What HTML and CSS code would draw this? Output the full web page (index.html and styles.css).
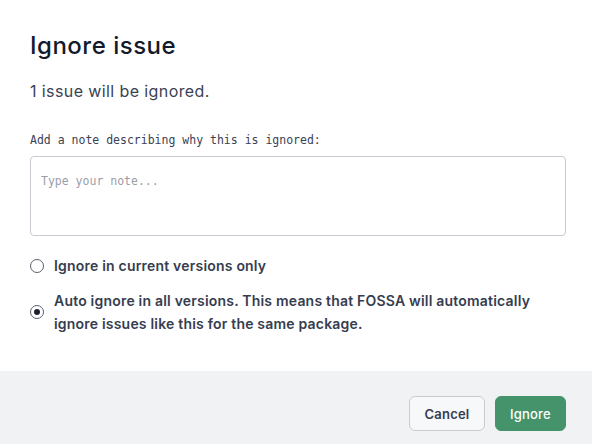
FILE: index.html
```html
<!DOCTYPE html>
<html>
<head>
<meta charset="utf-8">
<link rel="stylesheet" href="styles.css">
</head>
<body>
<div class="modal">
  <div class="content">
    <h1 class="title">Ignore issue</h1>
    <p class="summary">1 issue will be ignored.</p>
    <label class="note-label" for="note">Add a note describing why this is ignored:</label>
    <textarea id="note" class="note" placeholder="Type your note..."></textarea>
    <div class="options">
      <label class="option">
        <span class="radio"></span>
        <span class="option-text">Ignore in current versions only</span>
      </label>
      <label class="option option-multi">
        <span class="radio checked"></span>
        <span class="option-text">Auto ignore in all versions. This means that FOSSA will automatically ignore issues like this for the same package.</span>
      </label>
    </div>
  </div>
  <div class="footer">
    <button class="btn btn-secondary">Cancel</button>
    <button class="btn btn-primary">Ignore</button>
  </div>
</div>
</body>
</html>
```
FILE: styles.css
```css
html, body {
  margin: 0;
  padding: 0;
  background: #ffffff;
}
body {
  font-family: "Inter", "Noto Sans", sans-serif;
  color: #1b2233;
}
.modal {
  width: 592px;
  height: 444px;
  display: flex;
  flex-direction: column;
}
.content {
  flex: 1;
  padding: 30px 26px 0 30px;
  display: flex;
  flex-direction: column;
}
.title {
  margin: 0;
  font-size: 24px;
  font-weight: 500;
  line-height: 32px;
  color: #121a2c;
  letter-spacing: 0.5px;
}
.summary {
  margin: 18px 0 0 0;
  font-size: 16px;
  line-height: 22px;
  color: #3a4254;
  letter-spacing: 0.4px;
}
.note-label {
  margin-top: 30px;
  font-family: "DejaVu Sans Mono", monospace;
  font-size: 11.5px;
  line-height: 16px;
  color: #3a4254;
}
.note {
  margin-top: 8px;
  height: 80px;
  box-sizing: border-box;
  border: 1px solid #c9cad1;
  border-radius: 4px;
  padding: 17px 10px;
  resize: none;
  font-family: "DejaVu Sans Mono", monospace;
  font-size: 11.5px;
  outline: none;
}
.note::placeholder {
  color: #9a9ea8;
}
.options {
  margin-top: 18px;
  display: flex;
  flex-direction: column;
  gap: 12px;
}
.option {
  display: flex;
  align-items: center;
  gap: 10px;
  font-size: 14px;
  font-weight: 600;
  line-height: 23px;
  color: #363d4f;
  letter-spacing: 0.2px;
}
.radio {
  width: 12px;
  height: 12px;
  border: 1.5px solid #5b606c;
  border-radius: 50%;
  flex: none;
  box-sizing: content-box;
  display: flex;
  align-items: center;
  justify-content: center;
}
.radio.checked::after {
  content: "";
  width: 6px;
  height: 6px;
  border-radius: 50%;
  background: #1d2230;
}
.option-text {
  max-width: 500px;
}
.footer {
  height: 73px;
  background: #f1f2f3;
  display: flex;
  justify-content: flex-end;
  align-items: flex-start;
  gap: 10px;
  padding: 25px 26px 0 0;
  box-sizing: border-box;
}
.btn {
  height: 35px;
  border-radius: 6px;
  font-family: "Inter", sans-serif;
  font-size: 13px;
  font-weight: 600;
  padding: 0 10px;
  cursor: pointer;
  letter-spacing: 0.2px;
}
.btn-secondary {
  background: #f7f8f9;
  border: 1px solid #c9cbd0;
  color: #363d4f;
  width: 76px;
}
.btn-primary {
  background: #44936a;
  border: 1px solid #44936a;
  color: #ffffff;
  width: 71px;
  font-weight: 500;
}
```
